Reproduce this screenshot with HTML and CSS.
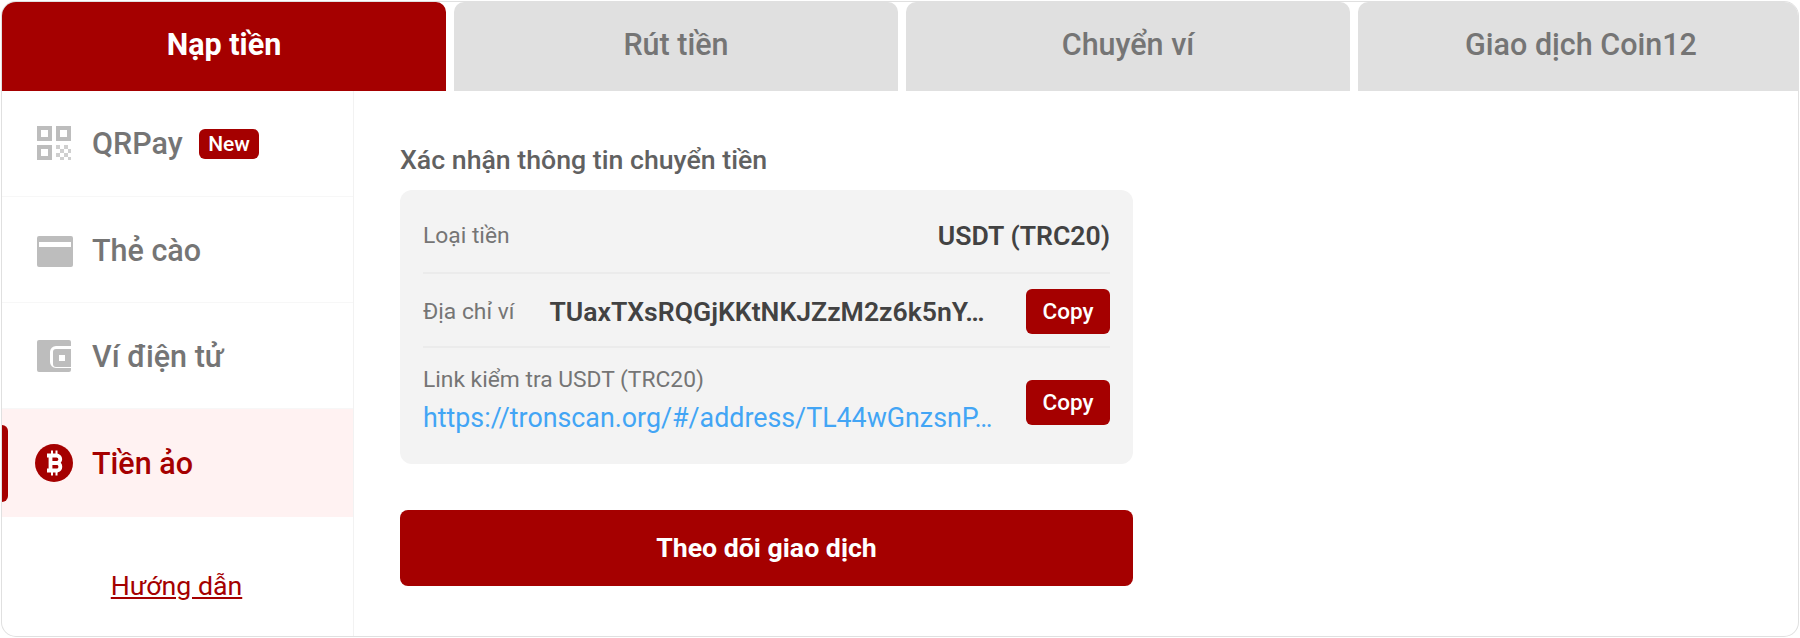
FILE: index.html
```html
<!DOCTYPE html>
<html lang="vi">
<head>
<meta charset="utf-8">
<title>Nạp tiền</title>
<link rel="stylesheet" href="styles.css">
</head>
<body>
<div class="panel">
  <nav class="tabs">
    <div class="tab tab-active">Nạp tiền</div>
    <div class="tab">Rút tiền</div>
    <div class="tab">Chuyển ví</div>
    <div class="tab tab-last">Giao dịch Coin12</div>
  </nav>
  <div class="content">
    <aside class="sidebar">
      <div class="side-item">
        <svg class="icon" viewBox="0 0 36 36" width="36" height="36">
          <path fill="#bdbdbd" fill-rule="evenodd" d="M0 0h15v15H0zM4 4v7h7V4zM19 0h15v15H19zM23 4v7h7V4zM0 19h15v15H0zM4 23v7h7v-7z"/>
          <path fill="#cfcfcf" d="M19 19h4v4h-4zM27 19h4v4h-4zM23 23h4v4h-4zM31 23h3v4h-3zM19 27h4v4h-4zM27 27h4v4h-4zM23 31h4v3h-4zM31 31h3v3h-3z"/>
        </svg>
        <span class="side-label">QRPay</span>
        <span class="badge">New</span>
      </div>
      <div class="side-item side-shifted">
        <svg class="icon" viewBox="0 0 36 36" width="36" height="36">
          <path fill="#bdbdbd" fill-rule="evenodd" d="M2 3h32a2 2 0 0 1 2 2v27a2 2 0 0 1-2 2H2a2 2 0 0 1-2-2V5a2 2 0 0 1 2-2zM2 9v5h32V9z"/>
        </svg>
        <span class="side-label">Thẻ cào</span>
      </div>
      <div class="side-item side-shifted">
        <svg class="icon" viewBox="0 0 36 36" width="36" height="36">
          <path fill="#bdbdbd" fill-rule="evenodd" d="M2 1h30a2 2 0 0 1 2 2v4H19a6 6 0 0 0-6 6v10a6 6 0 0 0 6 6h15v2a2 2 0 0 1-2 2H2a2 2 0 0 1-2-2V3a2 2 0 0 1 2-2zM19 10h15v18H19a3 3 0 0 1-3-3V13a3 3 0 0 1 3-3zM22 16v6h6v-6z"/>
        </svg>
        <span class="side-label">Ví điện tử</span>
      </div>
      <div class="side-item side-active">
        <span class="indicator"></span>
        <svg class="icon icon-coin" viewBox="0 0 38 38" width="38" height="38">
          <circle cx="19" cy="19" r="19" fill="#a50000"/>
          <path fill="none" stroke="#fff" stroke-width="3.800" d="M15.500 10v18M12 11.500h9.500a3.700 3.700 0 0 1 0 7.500h-6M15.500 19h7a3.900 3.900 0 0 1 0 7.500H12"/>
          <path fill="none" stroke="#fff" stroke-width="2" d="M17 6.500v4M21.500 6.500v4M17 27.500v4M21.500 27.500v4"/>
        </svg>
        <span class="side-label">Tiền ảo</span>
      </div>
      <div class="side-foot"><a class="guide" href="#">Hướng dẫn</a></div>
    </aside>
    <main class="main">
      <h2 class="heading">Xác nhận thông tin chuyển tiền</h2>
      <section class="info">
        <div class="info-row row-currency">
          <span class="info-label">Loại tiền</span>
          <span class="info-value">USDT (TRC20)</span>
        </div>
        <div class="info-row row-wallet">
          <span class="info-label">Địa chỉ ví</span>
          <span class="info-value wallet">TUaxTXsRQGjKKtNKJZzM2z6k5nY…</span>
          <button class="copy">Copy</button>
        </div>
        <div class="info-row row-link">
          <div class="link-col">
            <span class="info-label">Link kiểm tra USDT (TRC20)</span>
            <a class="link" href="#">https://tronscan.org/#/address/TL44wGnzsnP…</a>
          </div>
          <button class="copy">Copy</button>
        </div>
      </section>
      <button class="track">Theo dõi giao dịch</button>
    </main>
  </div>
</div>
</body>
</html>
```
FILE: styles.css
```css
* { box-sizing: border-box; }
html, body { margin: 0; padding: 0; background: #fff; }
body { font-family: Roboto, "Liberation Sans", sans-serif; width: 1800px; height: 638px; overflow: hidden; padding: 2px; }
.panel { width: 1796px; height: 634px; border-radius: 14px; background: #fff; box-shadow: 0 0 0 1px #e0e0e0; display: flex; flex-direction: column; overflow: hidden; }
.tabs { display: flex; gap: 8px; height: 89px; flex: none; }
.tab { width: 444px; flex: none; background: #e0e0e0; color: #757575; font-size: 30.500px; font-weight: 500; display: flex; align-items: center; justify-content: center; border-radius: 10px 10px 0 0; padding-bottom: 4px; }
.tab-active { background: #a50000; color: #fff; font-weight: 700; }
.tab-last { flex: 1; width: auto; padding-left: 6px; }
.content { flex: 1; display: flex; min-height: 0; }
.sidebar { width: 352px; flex: none; border-right: 1px solid #f2f2f2; display: flex; flex-direction: column; }
.side-item { height: 106px; flex: none; display: flex; align-items: center; gap: 19px; padding-left: 35px; border-bottom: 1px solid #f7f7f7; position: relative; }
.side-shifted { padding-top: 2px; }
.icon { flex: none; }
.icon-coin { margin-left: -2px; }
.side-label { font-size: 30.500px; font-weight: 500; color: #757575; }
.badge { background: #a50000; color: #fff; font-size: 21px; font-weight: 500; height: 30px; padding: 0 9.500px; border-radius: 6px; line-height: 30px; margin-left: -3px; }
.side-active { height: 108px; background: #fff2f2; border-bottom: 0; }
.side-active .side-label { color: #a50000; }
.indicator { position: absolute; left: 0; top: 16px; width: 6px; height: 77px; background: #a50000; border-radius: 0 6px 6px 0; }
.side-foot { flex: 1; display: flex; align-items: center; justify-content: center; padding-top: 18px; padding-right: 2px; }
.guide { color: #a50000; font-size: 26.700px; text-decoration: underline; }
.main { flex: 1; padding: 55px 0 0 46px; }
.heading { margin: 0 0 16px; font-size: 26.700px; line-height: 28px; font-weight: 500; color: #616161; }
.info { width: 733px; height: 274px; background: #f3f3f3; border-radius: 12px; padding: 0 23px; display: flex; flex-direction: column; }
.info-row { display: flex; align-items: center; justify-content: space-between; }
.row-currency { height: 84px; padding-top: 8px; border-bottom: 2px solid #ebebeb; }
.row-wallet { height: 74px; padding-top: 2px; border-bottom: 2px solid #ebebeb; }
.row-link { flex: 1; padding-bottom: 8px; }
.info-label { font-size: 22.800px; color: #757575; white-space: nowrap; }
.info-value { font-size: 26.600px; font-weight: 600; color: #424242; white-space: nowrap; }
.wallet { margin-left: 35px; margin-right: auto; }
.link-col { display: flex; flex-direction: column; gap: 9px; margin-bottom: 4px; }
.link { font-size: 26.800px; color: #42a5f5; text-decoration: none; white-space: nowrap; }
.copy { width: 84px; height: 45px; flex: none; border: 0; border-radius: 6px; background: #a50000; color: #fff; font: 500 22.500px Roboto, sans-serif; }
.track { display: block; margin-top: 46px; width: 733px; height: 76px; border: 0; border-radius: 8px; background: #a50000; color: #fff; font: 700 26.700px Roboto, sans-serif; }
```
